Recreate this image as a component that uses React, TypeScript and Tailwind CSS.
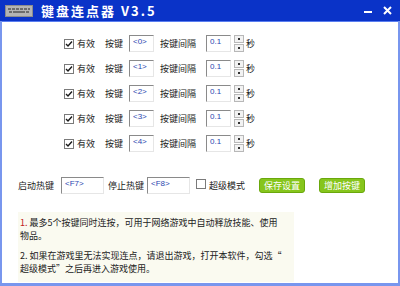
import React from 'react';

const cjk = { fontFamily: '"Noto Sans CJK SC", "Noto Sans", sans-serif' };

function Check({ checked }: { checked: boolean }) {
  return (
    <span className="inline-flex h-[10px] w-[10px] items-center justify-center border border-[#7a7a7a] bg-white">
      {checked && (
        <svg width="8" height="8" viewBox="0 0 8 8">
          <path d="M1 4 L3 6 L7 1.5" stroke="#1a1a1a" strokeWidth="1.4" fill="none" />
        </svg>
      )}
    </span>
  );
}

function Field({ value, w }: { value: string; w: string }) {
  return (
    <div
      className={`${w} flex h-[17px] items-start border-t border-l border-t-[#8a8a8a] border-l-[#8a8a8a] border-b border-r border-b-[#e6e6e6] border-r-[#e6e6e6] bg-white pl-[3px] pt-[1px] text-[8px] leading-[10px] text-[#2a46b0]`}
      style={{ fontFamily: '"Liberation Sans", sans-serif' }}
    >
      {value}
    </div>
  );
}

function Spin() {
  return (
    <div className="flex h-[17px] w-[10px] flex-col gap-[1px]">
      <div className="flex h-[8px] items-center justify-center border border-[#b8b8b8] bg-[#f2f2f2]">
        <span className="h-[2px] w-[2px] bg-[#333]" />
      </div>
      <div className="flex h-[8px] items-center justify-center border border-[#b8b8b8] bg-[#f2f2f2]">
        <span className="h-[2px] w-[2px] bg-[#333]" />
      </div>
    </div>
  );
}

function KeyRow({ idx }: { idx: number }) {
  return (
    <div className="flex h-[17px] items-center text-[9px] text-[#222]" style={cjk}>
      <Check checked />
      <span className="ml-[3px] w-[28px]">有效</span>
      <span className="w-[24px]">按键</span>
      <Field value={`<${idx}>`} w="w-[25px]" />
      <span className="ml-[6px] w-[46px]">按键间隔</span>
      <Field value="0.1" w="w-[25px]" />
      <div className="ml-[3px]">
        <Spin />
      </div>
      <span className="ml-[2px]">秒</span>
    </div>
  );
}

function GreenBtn({ label }: { label: string }) {
  return (
    <div className="flex h-[15px] items-center justify-center rounded-[3px] border border-[#6aa80c] bg-[#86c51c] px-[4px] text-[9px] text-white">
      {label}
    </div>
  );
}

export default function App() {
  return (
    <div className="flex h-[286px] w-[400px] flex-col overflow-hidden bg-[#7896ee]">
      {/* title bar */}
      <div className="flex h-[21px] shrink-0 items-center bg-[#0a33c8] pl-[5px] pr-[8px]">
        <svg width="28" height="12" viewBox="0 0 28 12">
          <rect x="0" y="0" width="28" height="12" fill="#8c8c8c" />
          <rect x="1" y="1" width="26" height="10" fill="#b4b4b4" />
          <g fill="#6c6c6c">
            <rect x="3" y="3" width="3" height="2" />
            <rect x="7" y="3" width="3" height="2" />
            <rect x="11" y="3" width="3" height="2" />
            <rect x="15" y="3" width="3" height="2" />
            <rect x="19" y="3" width="3" height="2" />
            <rect x="23" y="3" width="2" height="2" />
            <rect x="4" y="6" width="3" height="2" />
            <rect x="8" y="6" width="12" height="2" />
            <rect x="21" y="6" width="3" height="2" />
          </g>
        </svg>
        <span
          className="ml-[8px] text-[13px] font-bold tracking-[2px] text-white"
          style={{ fontFamily: '"Noto Sans CJK SC", sans-serif' }}
        >
          键盘连点器 V3.5
        </span>
        <div className="ml-auto flex items-center gap-[11px] text-white">
          <span className="mt-[2px] h-[2px] w-[8px] bg-white" />
          <svg width="9" height="9" viewBox="0 0 9 9">
            <path d="M1 1 L8 8 M8 1 L1 8" stroke="white" strokeWidth="2" />
          </svg>
        </div>
      </div>

      {/* body */}
      <div className="mx-[2px] mb-[3px] flex flex-1 flex-col border-t border-[#5a7ef0] bg-white" style={cjk}>
        <div className="ml-[62px] mt-[13px] flex flex-col gap-[8px]">
          {[0, 1, 2, 3, 4].map((i) => (
            <KeyRow key={i} idx={i} />
          ))}
        </div>

        <div className="ml-[16px] mt-[25px] flex h-[17px] items-center text-[9px] text-[#222]">
          <span className="w-[43px]">启动热键</span>
          <Field value="<F7>" w="w-[43px]" />
          <span className="ml-[4px] w-[39px]">停止热键</span>
          <Field value="<F8>" w="w-[43px]" />
          <span className="ml-[6px]">
            <Check checked={false} />
          </span>
          <span className="ml-[3px] w-[50px]">超级模式</span>
          <GreenBtn label="保存设置" />
          <span className="w-[14px]" />
          <GreenBtn label="增加按键" />
        </div>

        <div className="ml-[16px] mt-[18px] w-[276px] bg-[#fafaf0] px-[2px] pt-[4px] pb-[7px] text-[9px] leading-[13px] text-[#222]">
          <p className="whitespace-nowrap">
            <span className="text-[#c02020]">1.</span> 最多5个按键同时连按，可用于网络游戏中自动释放技能、使用
          </p>
          <p className="whitespace-nowrap">物品。</p>
          <p className="mt-[7px] whitespace-nowrap">
            2. 如果在游戏里无法实现连点，请退出游戏，打开本软件，勾选“
          </p>
          <p className="whitespace-nowrap">超级模式”之后再进入游戏使用。</p>
        </div>
      </div>
    </div>
  );
}
